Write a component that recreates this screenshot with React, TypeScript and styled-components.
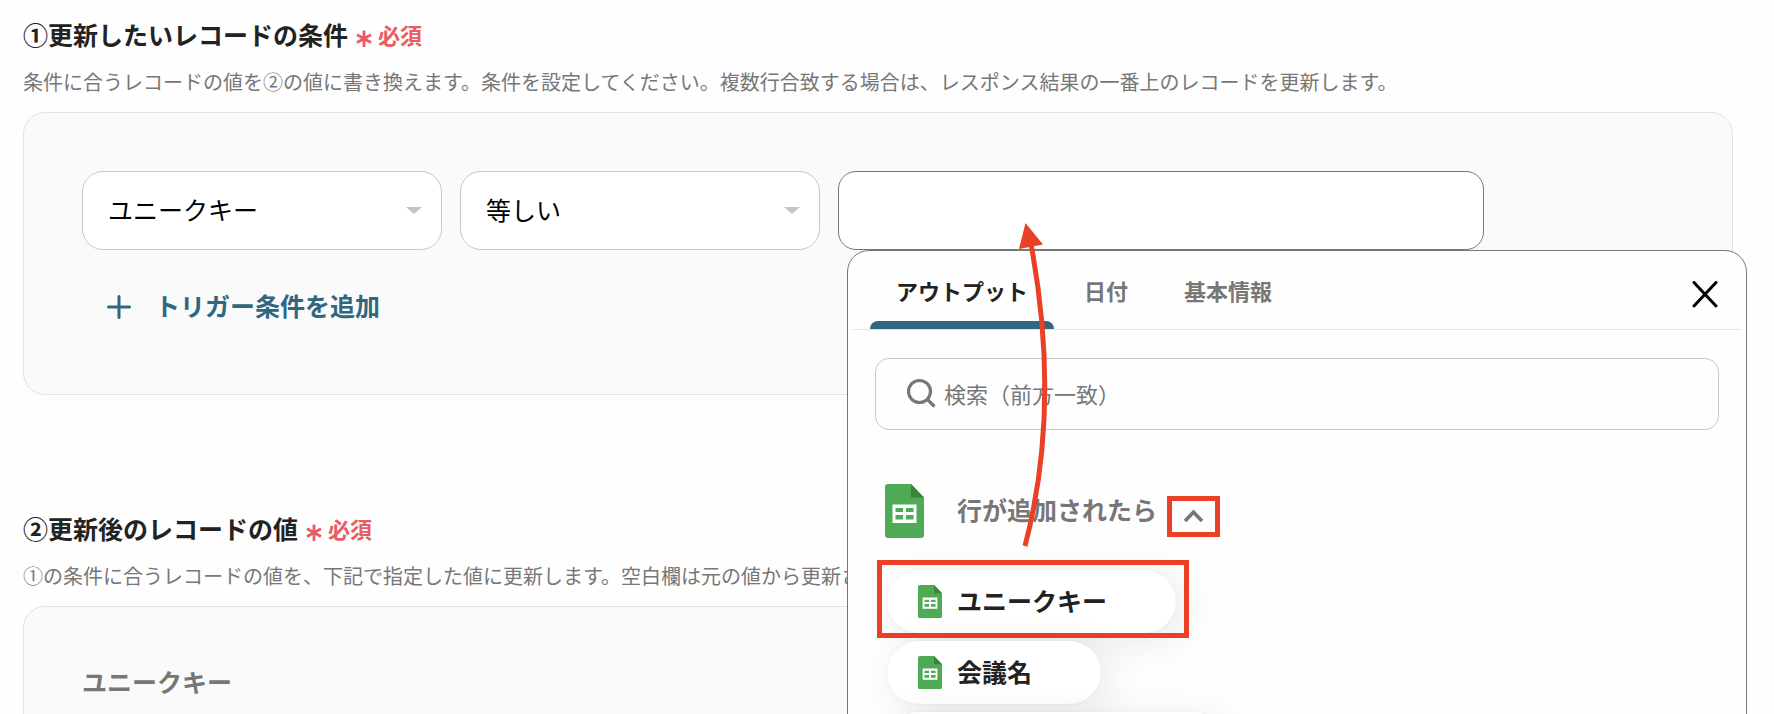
import React, { useId, useState } from "react";
import styled, { createGlobalStyle } from "styled-components";

const color = {
  ink: "#222222",
  muted: "#777777",
  accent: "#2f6781",
  required: "#ea5b62",
  callout: "#ea4025",
  panel: "#fafafa",
  panelLine: "#e0e2e8",
  line: "#c8c8c8",
};

const GlobalStyle = createGlobalStyle`
  *, *::before, *::after { box-sizing: border-box; }
  body {
    margin: 0;
    background: #fefefe;
    color: ${color.ink};
    font-family: "Noto Sans CJK JP", "Noto Sans", sans-serif;
  }
  button, input, select { font: inherit; color: inherit; }
`;

const Page = styled.main`
  display: flex;
  flex-direction: column;
  gap: 115px;
  height: 100vh;
  padding: 16px 41px 0 23px;
  overflow: hidden;
`;

const Section = styled.section`
  display: flex;
  flex-direction: column;
  gap: 16px;
`;

const Heading = styled.h2`
  display: flex;
  align-items: center;
  gap: 8px;
  margin: 0;
  font-size: 25px;
  line-height: 36px;
  font-weight: 700;
`;

const Required = styled.span`
  display: flex;
  align-items: center;
  gap: 6px;
  color: ${color.required};
  font-size: 22px;
`;

const Description = styled.p`
  margin: 0;
  color: ${color.muted};
  font-size: 20px;
  line-height: 28px;
  white-space: nowrap;
`;

const Panel = styled.div`
  padding: 58px;
  border: 1px solid ${color.panelLine};
  border-radius: 22px;
  background: ${color.panel};
`;

const ConditionRow = styled.div`
  display: flex;
  gap: 18px;
`;

const SelectWrap = styled.div`
  position: relative;
  flex: 0 1 360px;
`;

const Select = styled.select`
  appearance: none;
  width: 100%;
  height: 79px;
  padding: 0 48px 4px 25px;
  border: 1px solid ${color.line};
  border-radius: 21px;
  background: #ffffff;
  color: #000000;
  font-size: 25px;
`;

const Caret = styled.svg`
  position: absolute;
  top: 36px;
  right: 20px;
  pointer-events: none;
`;

const ValueField = styled.div`
  position: relative;
  flex: 0 1 646px;
`;

const TextInput = styled.input`
  display: block;
  width: 100%;
  height: 79px;
  padding: 0 25px;
  border: 1px solid ${color.muted};
  border-radius: 18px;
  background: #ffffff;
  font-size: 25px;
  outline: none;
`;

const Label = styled.span`
  padding-bottom: 4px;
`;

const AddButton = styled.button`
  display: flex;
  align-items: center;
  gap: 24px;
  height: 58px;
  margin-top: 28px;
  padding: 0 25px;
  border: 0;
  background: none;
  color: ${color.accent};
  font-size: 25px;
  font-weight: 700;
`;

const FieldLabel = styled.label`
  display: block;
  margin-bottom: 24px;
  color: ${color.muted};
  font-size: 25px;
  line-height: 32px;
  font-weight: 700;
`;

const Picker = styled.div`
  position: absolute;
  z-index: 1;
  top: 100%;
  left: 9px;
  width: 900px;
  padding: 0 5px 40px;
  border: 1px solid ${color.muted};
  border-radius: 22px;
  background: #fefefe;
`;

const PickerHeader = styled.div`
  display: flex;
  justify-content: space-between;
  align-items: stretch;
  height: 79px;
  padding: 0 17px;
  border-bottom: 1px solid #e2e2e2;
`;

const Tabs = styled.div`
  display: flex;
  gap: 4px;
`;

const Tab = styled.button<{ $active: boolean }>`
  position: relative;
  padding: 0 26px;
  border: 0;
  background: none;
  color: ${(p) => (p.$active ? color.ink : color.muted)};
  font-size: 22px;
  font-weight: 700;

  &::after {
    content: "";
    display: ${(p) => (p.$active ? "block" : "none")};
    position: absolute;
    right: 0;
    bottom: 0;
    left: 0;
    height: 8px;
    border-radius: 8px 8px 0 0;
    background: ${color.accent};
  }
`;

const CloseButton = styled.button`
  display: flex;
  align-items: center;
  padding: 8px 6px 0;
  border: 0;
  background: none;
  color: #000000;
`;

const SearchBox = styled.label`
  display: flex;
  align-items: center;
  gap: 8px;
  height: 72px;
  margin: 28px 22px 0;
  padding: 0 31px;
  border: 1px solid ${color.line};
  border-radius: 14px;
  color: ${color.muted};
`;

const SearchInput = styled.input`
  flex: 1;
  min-width: 0;
  padding: 0 0 2px;
  border: 0;
  background: none;
  font-size: 22px;
  outline: none;

  &::placeholder {
    color: ${color.muted};
    opacity: 1;
  }
`;

const Group = styled.div`
  display: flex;
  align-items: center;
  gap: 10px;
  margin: 54px 0 0 32px;
  color: ${color.muted};
  font-size: 25px;
  line-height: 36px;
  font-weight: 700;
`;

const GroupTitle = styled.div`
  display: flex;
  align-items: center;
  gap: 33px;
`;

const CollapseButton = styled.button`
  display: flex;
  align-items: center;
  justify-content: center;
  width: 53px;
  height: 41px;
  margin-top: 10px;
  padding: 0;
  border: 5px solid ${color.callout};
  background: none;
  color: inherit;
`;

const Items = styled.ul`
  display: flex;
  flex-direction: column;
  align-items: flex-start;
  gap: 8px;
  margin: 32px 0 0 34px;
  padding: 0;
  list-style: none;
`;

const Item = styled.li<{ $callout?: boolean }>`
  position: relative;

  &::after {
    content: "";
    display: ${(p) => (p.$callout ? "block" : "none")};
    position: absolute;
    inset: -10px -13px -5px -10px;
    border: 5px solid ${color.callout};
    pointer-events: none;
  }
`;

const Pill = styled.button`
  display: flex;
  align-items: center;
  gap: 15px;
  height: 63px;
  padding: 0 69px 0 31px;
  border: 0;
  border-radius: 32px;
  background: #ffffff;
  box-shadow: 8px 8px 40px rgba(0, 0, 0, 0.09), 0 0 2px rgba(0, 0, 0, 0.08);
  font-size: 25px;
  line-height: 28px;
  font-weight: 700;
`;

const Arrow = styled.svg`
  position: absolute;
  z-index: 2;
  top: 50px;
  left: 172px;
  pointer-events: none;
`;

function SheetIcon({ width, height }: { width: number; height: number }) {
  return (
    <svg width={width} height={height} viewBox="0 0 39 54" preserveAspectRatio="none" aria-hidden="true">
      <path d="M3 0H26L39 13.5V51a3 3 0 0 1-3 3H3a3 3 0 0 1-3-3V3a3 3 0 0 1 3-3Z" fill="#4eaa54" />
      <path d="M26 0L39 13.5H26Z" fill="#3a8438" />
      <path
        d="M7.500 20.500H31.500V39H7.500ZM10.500 24V28H18V24ZM21 24V28H28.500V24ZM10.500 31V35.500H18V31ZM21 31V35.500H28.500V31Z"
        fill="#ffffff"
        fillRule="evenodd"
      />
    </svg>
  );
}

function RequiredMark() {
  return (
    <Required>
      <svg width="16" height="36" viewBox="0 0 16 36" stroke="currentColor" strokeWidth="2.800" aria-hidden="true">
        <path d="M8 14.500V31M1 18.700L15 26.500M15 18.700L1 26.500" />
      </svg>
      必須
    </Required>
  );
}

function Dropdown({ label, options }: { label: string; options: string[] }) {
  return (
    <SelectWrap>
      <Select aria-label={label}>
        {options.map((option) => (
          <option key={option}>{option}</option>
        ))}
      </Select>
      <Caret width="16" height="7" viewBox="0 0 16 7" aria-hidden="true">
        <path d="M0 0H16L8 7Z" fill="#c4c4c4" />
      </Caret>
    </SelectWrap>
  );
}

const tabs = ["アウトプット", "日付", "基本情報"];
const outputs = ["ユニークキー", "会議名", "ミーティング日時"];

function OutputPicker() {
  const [active, setActive] = useState(tabs[0]);
  return (
    <Picker role="dialog" aria-label="アウトプットの選択">
      <PickerHeader>
        <Tabs role="tablist">
          {tabs.map((tab) => (
            <Tab
              key={tab}
              type="button"
              role="tab"
              aria-selected={tab === active}
              $active={tab === active}
              onClick={() => setActive(tab)}
            >
              {tab}
            </Tab>
          ))}
        </Tabs>
        <CloseButton type="button" aria-label="閉じる">
          <svg width="26" height="27" viewBox="0 0 26 27" stroke="currentColor" strokeWidth="3" strokeLinecap="round">
            <path d="M2 1.500L24 25M24 1.500L2 25" />
          </svg>
        </CloseButton>
      </PickerHeader>
      <SearchBox>
        <svg width="29" height="35" viewBox="0 0 29 35" fill="none" stroke="currentColor" strokeWidth="3.200" aria-hidden="true">
          <circle cx="12.500" cy="14.500" r="11" />
          <path d="M20 22L27.500 29.500" />
        </svg>
        <SearchInput type="search" aria-label="検索" placeholder="検索（前方一致）" />
      </SearchBox>
      <Group>
        <GroupTitle>
          <SheetIcon width={39} height={54} />
          <Label>行が追加されたら</Label>
        </GroupTitle>
        <CollapseButton type="button" aria-label="折りたたむ">
          <svg width="20" height="15" viewBox="0 0 20 15" fill="none" stroke="currentColor" strokeWidth="3.600">
            <path d="M1 12L9.500 3.200L18 12" />
          </svg>
        </CollapseButton>
      </Group>
      <Items>
        {outputs.map((name, index) => (
          <Item key={name} $callout={index === 0}>
            <Pill type="button">
              <SheetIcon width={24} height={33} />
              <Label>{name}</Label>
            </Pill>
          </Item>
        ))}
      </Items>
    </Picker>
  );
}

export default function App() {
  const keyId = useId();
  return (
    <>
      <GlobalStyle />
      <Page>
        <Section>
          <Heading>
            ①更新したいレコードの条件
            <RequiredMark />
          </Heading>
          <Description>
            条件に合うレコードの値を②の値に書き換えます。条件を設定してください。複数行合致する場合は、レスポンス結果の一番上のレコードを更新します。
          </Description>
          <Panel>
            <ConditionRow>
              <Dropdown label="項目" options={["ユニークキー", "会議名"]} />
              <Dropdown label="条件" options={["等しい", "等しくない"]} />
              <ValueField>
                <TextInput type="text" aria-label="値" />
                <OutputPicker />
                <Arrow width="40" height="330" viewBox="0 0 40 330" aria-hidden="true">
                  <path d="M15 325C40 229 40 125 21 23" fill="none" stroke={color.callout} strokeWidth="5" />
                  <path d="M15.500 2L33 23.500L9 28Z" fill={color.callout} />
                </Arrow>
              </ValueField>
            </ConditionRow>
            <AddButton type="button">
              <svg width="24" height="24" viewBox="0 0 24 24" stroke="currentColor" strokeWidth="3" strokeLinecap="round" aria-hidden="true">
                <path d="M12 1.500V22.500M1.500 12H22.500" />
              </svg>
              <Label>トリガー条件を追加</Label>
            </AddButton>
          </Panel>
        </Section>
        <Section>
          <Heading>
            ②更新後のレコードの値
            <RequiredMark />
          </Heading>
          <Description>
            ①の条件に合うレコードの値を、下記で指定した値に更新します。空白欄は元の値から更新されません。
          </Description>
          <Panel>
            <FieldLabel htmlFor={keyId}>ユニークキー</FieldLabel>
            <TextInput id={keyId} type="text" />
          </Panel>
        </Section>
      </Page>
    </>
  );
}
